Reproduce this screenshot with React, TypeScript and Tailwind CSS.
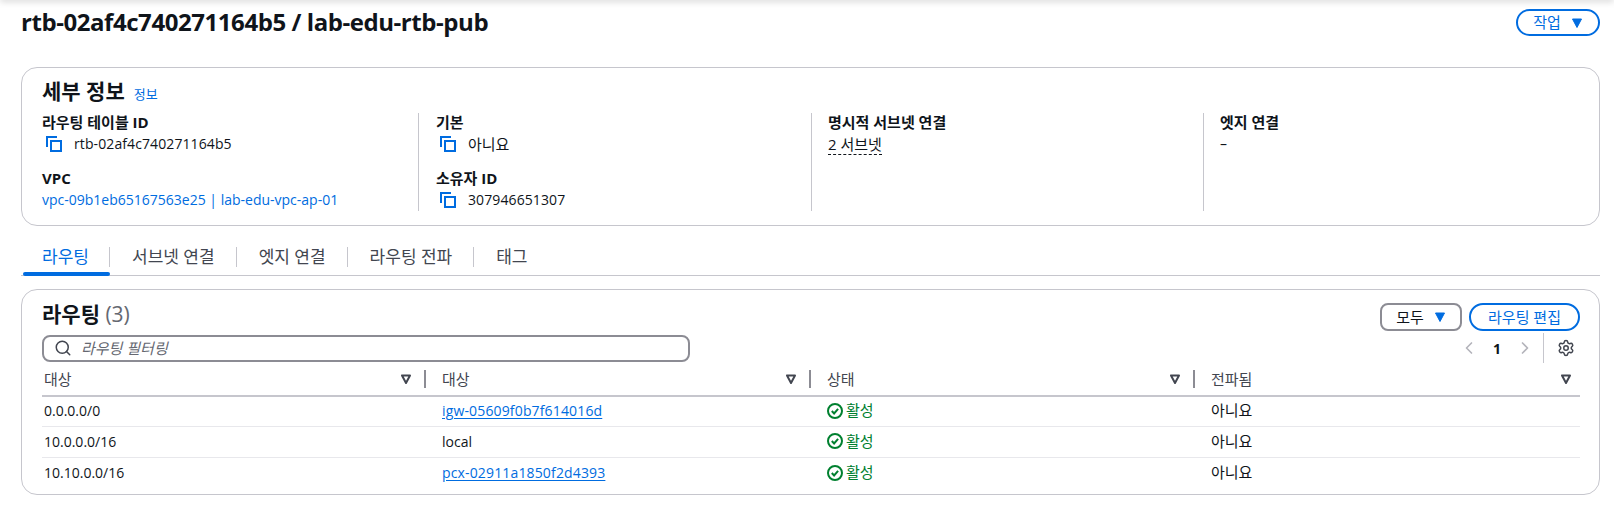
import React from 'react'
import { Search, Settings, ChevronLeft, ChevronRight } from 'lucide-react'

const font = { fontFamily: '"Open Sans", "Noto Sans CJK KR", sans-serif' }

const CopyIcon = () => (
  <svg width="16" height="16" viewBox="0 0 16 16" fill="none" stroke="#006ce0" strokeWidth="2" className="shrink-0">
    <path d="M1 11V1h10" />
    <rect x="5" y="5" width="10" height="10" />
  </svg>
)

const SortIcon = () => (
  <svg width="12" height="12" viewBox="0 0 12 12" fill="none" stroke="#424650" strokeWidth="2" className="shrink-0">
    <path d="M2 2.5h8L6 10z" strokeLinejoin="round" />
  </svg>
)

const Caret = () => (
  <svg width="12" height="12" viewBox="0 0 12 12" fill="#006ce0" stroke="#006ce0" className="shrink-0">
    <path d="M1.5 2h9L6 10.5z" strokeLinejoin="round" />
  </svg>
)

const StatusIcon = () => (
  <svg width="16" height="16" viewBox="0 0 16 16" fill="none" stroke="#00802f" strokeWidth="2" className="shrink-0">
    <circle cx="8" cy="8" r="7" />
    <path d="M4.8 8l2.3 2.4 4-4.6" />
  </svg>
)

const Field = ({ label, children }: { label: string; children: React.ReactNode }) => (
  <div className="flex flex-col shrink-0 h-[56px]">
    <div className="-mt-[1px] text-[15px] leading-[20px] font-bold text-[#0f141a]">{label}</div>
    <div className="mt-[2px] text-[14px] leading-[20px] text-[#0f141a]">{children}</div>
  </div>
)

const Copyable = ({ value, korean }: { value: string; korean?: boolean }) => (
  <div className="flex items-center gap-[12px] pl-[4px]">
    <CopyIcon />
    <span className={korean ? 'text-[15px]' : 'tracking-[0.1px]'}>{value}</span>
  </div>
)

const tabs = ['라우팅', '서브넷 연결', '엣지 연결', '라우팅 전파', '태그']

const routes = [
  { dest: '0.0.0.0/0', target: 'igw-05609f0b7f614016d', link: true },
  { dest: '10.0.0.0/16', target: 'local', link: false },
  { dest: '10.10.0.0/16', target: 'pcx-02911a1850f2d4393', link: true },
]

const HeaderCell = ({ label, last }: { label: string; last?: boolean }) => (
  <div className="flex items-center h-[32px]">
    <span className="flex-1 pl-[2px] text-[15px] text-[#424650]">{label}</span>
    <SortIcon />
    {!last && <div className="ml-[12px] mr-[14px] w-[2px] h-[18px] bg-[#8c8c94]" />}
    {last && <div className="w-[8px]" />}
  </div>
)

export default function App() {
  return (
    <div style={font} className="relative w-[1614px] h-[513px] overflow-hidden bg-white text-[#0f141a] pl-[21px] pr-[14px]">
      {/* top shadow of the nav bar */}
      <div className="absolute left-0 right-0 -top-[6px] h-[6px] shadow-[0_2px_6px_rgba(0,0,0,0.15)]" />

      <div className="flex items-center justify-between h-[45px]">
        <h1 className="text-[24px] font-bold leading-[30px] tracking-[-0.44px] mb-[1px]">rtb-02af4c740271164b5 / lab-edu-rtb-pub</h1>
        <button className="flex items-center justify-center gap-[10px] w-[84px] h-[27px] rounded-full border-2 border-[#006ce0] text-[#006ce0] text-[15px]">
          작업 <Caret />
        </button>
      </div>

      {/* details card */}
      <section className="mt-[22px] h-[159px] rounded-[16px] border border-[#c6c6cd] px-[20px] pt-[9px]">
        <div className="flex items-baseline gap-[9px] h-[35px]">
          <h2 className="text-[21px] font-bold leading-[28px]">세부 정보</h2>
          <a className="text-[13px] text-[#006ce0]">정보</a>
        </div>
        <div className="grid grid-cols-[376px_393px_392px_1fr] mt-[1px]">
          <div className="flex flex-col h-[98px]">
            <Field label="라우팅 테이블 ID"><Copyable value="rtb-02af4c740271164b5" /></Field>
            <Field label="VPC">
              <a className="text-[#006ce0]">vpc-09b1eb65167563e25 | lab-edu-vpc-ap-01</a>
            </Field>
          </div>
          <div className="flex flex-col h-[98px] border-l border-[#c6c6cd] pl-[17px]">
            <Field label="기본"><Copyable value="아니요" korean /></Field>
            <Field label="소유자 ID"><Copyable value="307946651307" /></Field>
          </div>
          <div className="h-[98px] border-l border-[#c6c6cd] pl-[16px]">
            <Field label="명시적 서브넷 연결">
              <span className="text-[15px] border-b border-dashed border-[#0f141a]">2 서브넷</span>
            </Field>
          </div>
          <div className="h-[98px] border-l border-[#c6c6cd] pl-[16px]">
            <Field label="엣지 연결">–</Field>
          </div>
        </div>
      </section>

      {/* tabs */}
      <div className="mt-[15px] flex h-[35px] border-b border-[#c6c6cd] items-start">
        {tabs.map((tab, i) => (
          <div
            key={tab}
            className={`relative flex items-center justify-center h-[32px] ${i === 0 ? 'w-[89px] text-[#006ce0]' : 'px-[22px] text-[#424650]'} text-[17px]`}
          >
            {tab}
            {i < tabs.length - 1 && <div className="absolute right-0 top-[6px] h-[20px] w-px bg-[#c6c6cd]" />}
            {i === 0 && <div className="absolute left-[2px] right-0 -bottom-[3px] h-[4px] rounded-t-sm rounded-b-sm bg-[#006ce0]" />}
          </div>
        ))}
      </div>

      {/* routes card */}
      <section className="mt-[13px] h-[206px] rounded-[16px] border border-[#c6c6cd] pl-[20px] pr-[19px] pt-[12px]">
        <div className="flex justify-between items-start h-[32px]">
          <h2 className="text-[21px] font-bold leading-[28px] mt-[-2px]">
            라우팅 <span className="font-normal text-[#656871]">(3)</span>
          </h2>
          <div className="flex gap-[7px] mt-[1px]">
            <button className="flex items-center justify-center gap-[10px] w-[82px] h-[28px] rounded-lg border-2 border-[#8c8c94] text-[15px]">
              모두 <Caret />
            </button>
            <button className="w-[111px] h-[28px] rounded-full border-2 border-[#006ce0] text-[#006ce0] text-[15px]">
              라우팅 편집
            </button>
          </div>
        </div>
        <div className="flex justify-between items-center h-[28px]">
          <div className="flex items-center gap-[9px] w-[648px] h-[27px] px-[10px] rounded-lg border-2 border-[#8c8c94]">
            <Search size={18} strokeWidth={2} color="#424650" />
            <span className="italic text-[15px] text-[#656871]">라우팅 필터링</span>
          </div>
          <div className="flex items-center h-[32px]">
            <ChevronLeft size={20} strokeWidth={2} color="#b4b4bb" />
            <span className="w-[36px] text-center text-[14px] font-bold">1</span>
            <ChevronRight size={20} strokeWidth={2} color="#b4b4bb" />
            <div className="ml-[8px] mr-[13px] h-[30px] w-px bg-[#c6c6cd]" />
            <Settings size={18} strokeWidth={2} color="#424650" className="mr-[5px]" />
          </div>
        </div>
        <div className="grid grid-cols-[398px_385px_384px_1fr] border-b-2 border-[#c6c6cd] mt-[1px]">
          <HeaderCell label="대상" />
          <HeaderCell label="대상" />
          <HeaderCell label="상태" />
          <HeaderCell label="전파됨" last />
        </div>
        {routes.map((r, i) => (
          <div
            key={r.dest}
            className={`grid grid-cols-[398px_385px_384px_1fr] items-center text-[14px] pb-[2px] ${i === 0 ? 'h-[30px]' : 'h-[31px]'} ${i < routes.length - 1 ? 'border-b border-[#e8e8ec]' : ''}`}
          >
            <span className="pl-[2px]">{r.dest}</span>
            <span className="pl-[2px]">
              {r.link ? <a className="text-[#006ce0] underline underline-offset-2 tracking-[0.15px]">{r.target}</a> : r.target}
            </span>
            <span className="flex items-center gap-[3px] pl-[2px] text-[15px] text-[#00802f]">
              <StatusIcon />
              활성
            </span>
            <span className="pl-[2px] text-[15px]">아니요</span>
          </div>
        ))}
      </section>
    </div>
  )
}
